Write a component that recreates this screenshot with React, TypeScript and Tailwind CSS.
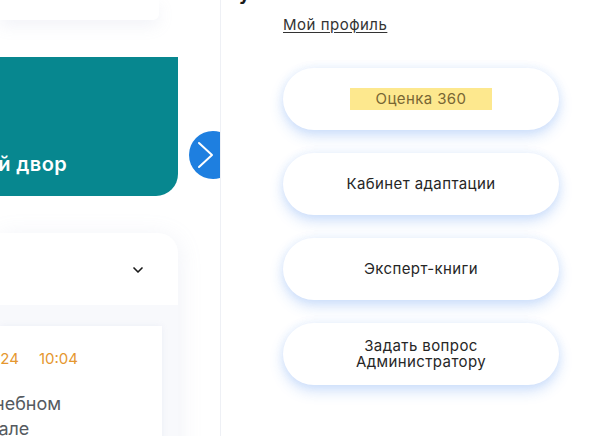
import { ChevronDown } from 'lucide-react'

const links = ['Кабинет адаптации', 'Эксперт-книги']

function PillButton({ children }: { children: React.ReactNode }) {
    return (
        <button className="w-[276px] h-[62px] rounded-full bg-white flex items-center justify-center text-center text-[15px] tracking-[0.4px] leading-[16px] text-[#262626] shadow-[0_6px_14px_rgba(40,120,235,0.22),0_0_10px_rgba(40,120,235,0.08)]">
            {children}
        </button>
    )
}

export default function App() {
    return (
        <div
            className="w-[612px] h-[436px] overflow-hidden bg-white flex"
            style={{ fontFamily: 'Inter, "Noto Sans", sans-serif' }}
        >
            {/* left column: feed clipped by the sidebar */}
            <div className="relative w-[221px] shrink-0 h-full overflow-hidden border-r border-[#eef0f5]">
                <div className="w-[159px] h-[20px] bg-white rounded-br-[6px] shadow-[0_6px_16px_rgba(150,160,200,0.12)]" />

                <div className="relative mt-[37px] w-[178px] h-[139px] bg-[#07878f] rounded-br-[22px] flex items-end pb-[22px]">
                    <span className="text-white text-[20px] font-semibold tracking-[0.4px] leading-none whitespace-nowrap -ml-[80px]">
                        Скотный двор
                    </span>
                    <div className="absolute left-[189px] top-[74px] w-[48px] h-[48px] rounded-full bg-[#1e7fe0]">
                        <svg width="48" height="48" viewBox="0 0 48 48" fill="none">
                            <polyline
                                points="10,12 23,24 10,36"
                                stroke="white"
                                strokeWidth="2"
                                strokeLinecap="round"
                                strokeLinejoin="round"
                            />
                        </svg>
                    </div>
                </div>

                <div className="mt-[37px] w-[178px] h-[240px] bg-white rounded-tr-[20px] shadow-[0_4px_24px_rgba(150,160,200,0.16)] flex flex-col">
                    <div className="h-[72px] flex items-center justify-end pr-[32px] pt-[2px]">
                        <ChevronDown size={16} strokeWidth={2.5} className="text-[#1a1a1a]" />
                    </div>
                    <div className="flex-1 bg-[#f8f9fc] pt-[21px] pr-[16px]">
                        <div className="bg-white h-full shadow-[0_0_6px_rgba(150,160,200,0.12)] pt-[25px]">
                            <div className="flex gap-[20px] text-[15px] text-[#e5972f] -ml-[4px] leading-none">
                                <span>.24</span>
                                <span>10:04</span>
                            </div>
                            <div className="mt-[25px] text-[18px] leading-[25px] text-[#555a60] -ml-[6px] whitespace-nowrap">
                                <div>небном</div>
                                <div className="-ml-[4px]">тале</div>
                            </div>
                        </div>
                    </div>
                </div>
            </div>

            {/* right column: profile menu */}
            <div className="flex-1 pl-[62px]">
                <div className="-mt-[17px] h-[22px] text-[18px] font-bold text-[#1a1a1a] leading-[22px] -ml-[44px]">
                    у
                </div>
                <a className="block mt-[12px] w-fit text-[15px] tracking-[0.5px] leading-[16px] text-[#333] underline underline-offset-[2px]">
                    Мой профиль
                </a>
                <div className="mt-[35px] flex flex-col gap-[23px]">
                    <PillButton>
                        <span className="bg-[#fde88e] px-[26px] h-[22px] flex items-center text-[#786634]">
                            Оценка 360
                        </span>
                    </PillButton>
                    {links.map((l) => (
                        <PillButton key={l}>{l}</PillButton>
                    ))}
                    <PillButton>
                        Задать вопрос
                        <br />
                        Администратору
                    </PillButton>
                </div>
            </div>
        </div>
    )
}
